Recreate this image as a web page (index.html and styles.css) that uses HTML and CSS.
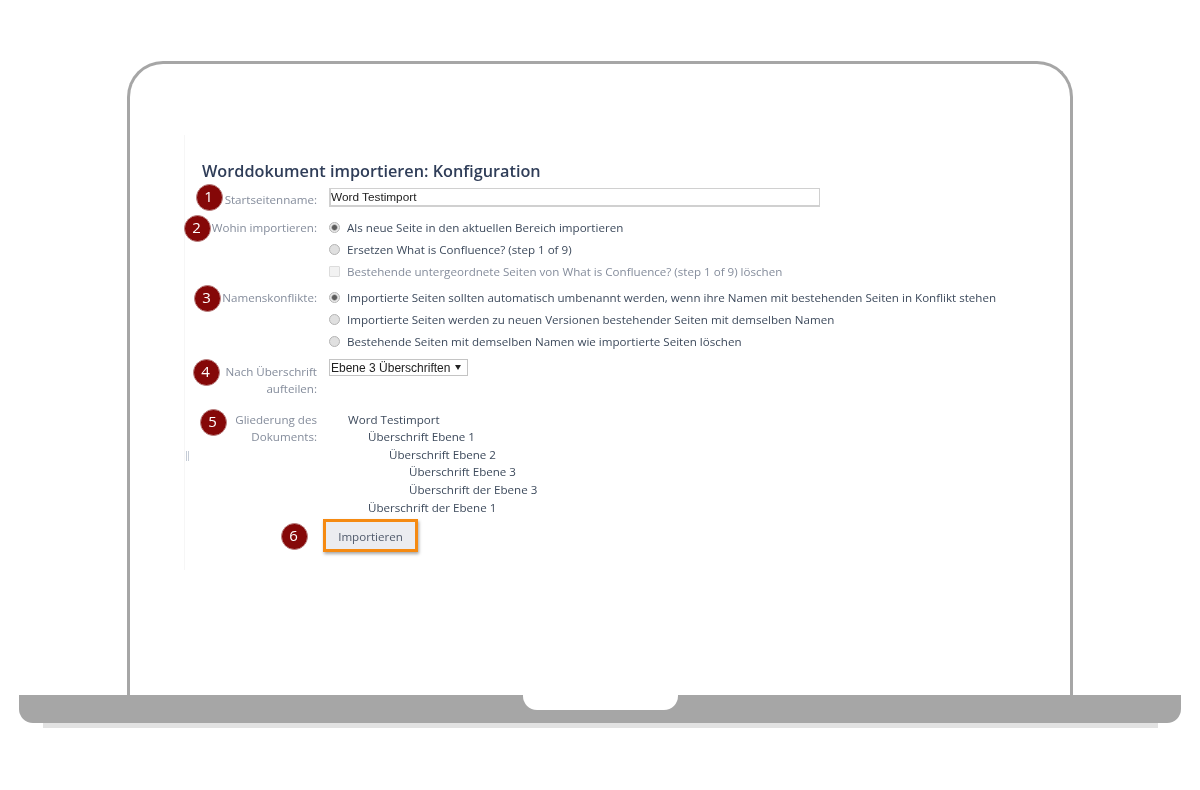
FILE: index.html
```html
<!DOCTYPE html>
<html lang="de">
<head>
    <meta charset="UTF-8">
    <meta name="viewport" content="width=device-width, initial-scale=1.0">
    <title>Worddokument importieren</title>
    <link rel="stylesheet" href="styles.css">
</head>
<body>
    <div class="laptop">
        <div class="lid">
            <div class="screen">
                <h1>Worddokument importieren: Konfiguration</h1>

                <div class="row row-name">
                    <label class="row-label">Startseitenname:</label>
                    <div class="row-content">
                        <input class="text-input" type="text" value="Word Testimport">
                    </div>
                </div>

                <div class="row row-target">
                    <label class="row-label">Wohin importieren:</label>
                    <div class="row-content">
                        <div class="option"><input type="radio" name="target" checked><span>Als neue Seite in den aktuellen Bereich importieren</span></div>
                        <div class="option"><input type="radio" name="target"><span>Ersetzen What is Confluence? (step 1 of 9)</span></div>
                        <div class="option option-disabled"><input type="checkbox" disabled><span>Bestehende untergeordnete Seiten von What is Confluence? (step 1 of 9) löschen</span></div>
                    </div>
                </div>

                <div class="row row-conflict">
                    <label class="row-label">Namenskonflikte:</label>
                    <div class="row-content">
                        <div class="option"><input type="radio" name="conflict" checked><span>Importierte Seiten sollten automatisch umbenannt werden, wenn ihre Namen mit bestehenden Seiten in Konflikt stehen</span></div>
                        <div class="option"><input type="radio" name="conflict"><span>Importierte Seiten werden zu neuen Versionen bestehender Seiten mit demselben Namen</span></div>
                        <div class="option"><input type="radio" name="conflict"><span>Bestehende Seiten mit demselben Namen wie importierte Seiten löschen</span></div>
                    </div>
                </div>

                <div class="row row-split">
                    <label class="row-label">Nach Überschrift aufteilen:</label>
                    <div class="row-content">
                        <div class="select-box"><span>Ebene 3 Überschriften</span><span class="select-arrow"></span></div>
                    </div>
                </div>

                <div class="row row-outline">
                    <label class="row-label">Gliederung des Dokuments:</label>
                    <ul class="outline">
                        <li>Word Testimport</li>
                        <li class="level-1">Überschrift Ebene 1</li>
                        <li class="level-2">Überschrift Ebene 2</li>
                        <li class="level-3">Überschrift Ebene 3</li>
                        <li class="level-3">Überschrift der Ebene 3</li>
                        <li class="level-1">Überschrift der Ebene 1</li>
                    </ul>
                </div>

                <button class="import-button">Importieren</button>

                <div class="resize-handle"></div>

                <span class="badge badge-1">1</span>
                <span class="badge badge-2">2</span>
                <span class="badge badge-3">3</span>
                <span class="badge badge-4">4</span>
                <span class="badge badge-5">5</span>
                <span class="badge badge-6">6</span>
            </div>
        </div>
        <div class="base">
            <div class="notch"></div>
        </div>
        <div class="foot"></div>
    </div>
</body>
</html>
```

FILE: styles.css
```css
body {
    margin: 0;
    background-color: #ffffff;
    font-family: "Open Sans", Arial, sans-serif;
    font-size: 11.6px;
    color: #3d4a5c;
}

.laptop {
    display: flex;
    flex-direction: column;
    align-items: center;
    padding-top: 61px;
}

.lid {
    box-sizing: border-box;
    width: 946px;
    height: 634px;
    padding: 71px 0 0 54px;
    border: 3px solid #a6a6a6;
    border-bottom: none;
    border-radius: 36px 36px 0 0;
}

.base {
    display: flex;
    justify-content: center;
    width: 1162px;
    height: 28px;
    background-color: #a6a6a6;
    border-radius: 0 0 14px 14px;
}

.notch {
    width: 155px;
    height: 15px;
    background-color: #ffffff;
    border-radius: 0 0 14px 14px;
}

.foot {
    width: 1115px;
    height: 5px;
    background-color: #e2e2e2;
}

.screen {
    position: relative;
    box-sizing: border-box;
    width: 840px;
    height: 435px;
    padding-top: 25px;
    border-left: 1px solid #f6f6f6;
    filter: blur(0.5px);
}

h1 {
    margin: 0 0 6px 17px;
    font-size: 16.25px;
    line-height: 22px;
    font-weight: 600;
    color: #2f3d58;
}

.row {
    display: flex;
    gap: 12px;
}

.row-label {
    flex: none;
    width: 132px;
    text-align: right;
    line-height: 17.6px;
    color: #858d9c;
}

.row-content {
    flex: 1;
}

.row-name .row-label {
    padding-top: 3px;
}

.text-input {
    display: block;
    box-sizing: border-box;
    width: 491px;
    height: 19px;
    padding: 0;
    border: 2px solid #d0d0d0;
    border-width: 1px 1px 2px 2px;
    font-family: "Liberation Sans", Arial, sans-serif;
    font-size: 11.8px;
    color: #222222;
}

.row-target {
    margin-top: 8px;
}

.row-target .row-label,
.row-conflict .row-label {
    line-height: 22px;
}

.row-conflict {
    margin-top: 4px;
}

.row-split {
    margin-top: 6px;
    height: 52px;
}

.row-split .row-label {
    padding-top: 4px;
}

.option {
    display: flex;
    align-items: center;
    gap: 7px;
    height: 22px;
}

.option input {
    appearance: none;
    flex: none;
    box-sizing: border-box;
    width: 11px;
    height: 11px;
    margin: 0;
    background-color: #e0e0e0;
    border: 1px solid #b4b4b4;
    border-radius: 50%;
}

.option input:checked {
    background: radial-gradient(circle, #5c5c5c 0, #5c5c5c 2px, #e8e8e8 3.5px);
}

.option input[type="checkbox"] {
    background-color: #f2f2f2;
    border-color: #dcdcdc;
    border-radius: 1px;
}

.option-disabled span {
    color: #858d9c;
}

.select-box {
    display: flex;
    align-items: center;
    justify-content: space-between;
    box-sizing: border-box;
    width: 139px;
    height: 17px;
    padding: 1px 6px 0 1px;
    border: 1px solid #c4c4c4;
    font-family: "Liberation Sans", Arial, sans-serif;
    font-size: 12px;
    color: #222222;
}

.select-arrow {
    width: 0;
    height: 0;
    border-left: 3px solid transparent;
    border-right: 3px solid transparent;
    border-top: 5px solid #222222;
}

.outline {
    margin: 0;
    padding: 0 0 0 19px;
    list-style: none;
    line-height: 17.6px;
}

.level-1 {
    padding-left: 20px;
}

.level-2 {
    padding-left: 41px;
}

.level-3 {
    padding-left: 61px;
}

.import-button {
    display: block;
    box-sizing: border-box;
    width: 95px;
    height: 33px;
    margin: 3px 0 0 138px;
    padding-top: 3px;
    border: 3px solid #f58a12;
    background-color: #ebecf0;
    box-shadow: 1px 2px 3px rgba(0, 0, 0, 0.35);
    font-family: "Open Sans", Arial, sans-serif;
    font-size: 11.6px;
    color: #505a6b;
}

.resize-handle {
    position: absolute;
    top: 316px;
    left: 1px;
    width: 1px;
    height: 10px;
    border-left: 1px solid #c5ccd6;
    border-right: 1px solid #c5ccd6;
}

.badge {
    position: absolute;
    display: flex;
    align-items: center;
    justify-content: center;
    box-sizing: border-box;
    width: 27px;
    height: 27px;
    padding: 0 2px 3px 0;
    background-color: #850808;
    border: 1px solid #b88080;
    border-radius: 50%;
    font-size: 15px;
    color: #ffffff;
}

.badge-1 { top: 49px; left: 11px; }
.badge-2 { top: 80px; left: -1px; }
.badge-3 { top: 150px; left: 9px; }
.badge-4 { top: 224px; left: 8px; }
.badge-5 { top: 274px; left: 15px; }
.badge-6 { top: 388px; left: 96px; }
```
